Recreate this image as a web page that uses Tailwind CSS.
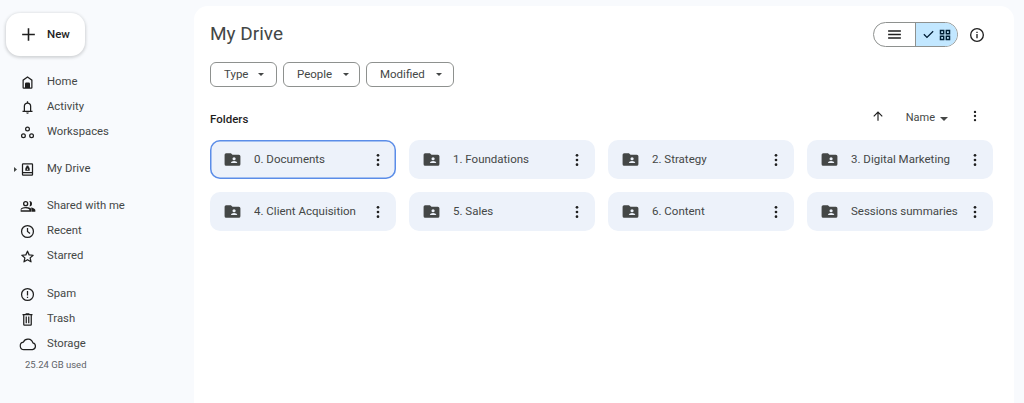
<!DOCTYPE html>
<html lang="en">
<head>
    <meta charset="UTF-8">
    <title>My Drive</title>
    <script src="https://cdn.jsdelivr.net/npm/@tailwindcss/browser@4"></script>
</head>
<body class="bg-[#f8fafd] h-[403px] overflow-hidden flex font-['Roboto',sans-serif] text-[#444746]">
<!-- Sidebar -->
<aside class="w-[194px] shrink-0 flex flex-col">
    <button class="ml-[6px] mt-[13px] w-[79px] h-[43px] bg-white rounded-[14px] shadow-[0_1px_3px_1px_rgba(60,64,67,0.2)] flex items-center text-[#1f1f1f] text-[11.5px] font-medium">
        <svg class="ml-[13px] w-[19px] h-[19px]" viewBox="0 0 24 24" fill="#1f1f1f"><path d="M11 13H4v-2h7V4h2v7h7v2h-7v7h-2z"/></svg>
        <span class="ml-[9px]">New</span>
    </button>
    <nav class="mt-[14px] flex flex-col text-[11.3px]">
        <a class="h-[25px] flex items-center pl-[20px] gap-[12px]">
            <svg class="w-[15px] h-[15px]" viewBox="0 0 24 24" fill="#1f1f1f"><path d="M12 2 4 7.500V20a2 2 0 0 0 2 2h12a2 2 0 0 0 2-2V7.500L12 2zm6 18h-2v-6a2 2 0 0 0-2-2h-4a2 2 0 0 0-2 2v6H6V8.600l6-4.200 6 4.200V20z"/><path d="M9.500 14h5v6h-5z"/></svg>
            <span>Home</span>
        </a>
        <a class="h-[25px] flex items-center pl-[20px] gap-[12px]">
            <svg class="w-[15px] h-[15px]" viewBox="0 0 24 24" fill="#1f1f1f"><path d="M4 19v-2h2v-7a6 6 0 0 1 5-5.900V2h2v2.100A6 6 0 0 1 18 10v7h2v2H4zm4-2h8v-7a4 4 0 0 0-8 0v7zm4 5a2 2 0 0 1-2-2h4a2 2 0 0 1-2 2z"/></svg>
            <span>Activity</span>
        </a>
        <a class="h-[25px] flex items-center pl-[20px] gap-[12px]">
            <svg class="w-[15px] h-[15px]" viewBox="0 0 24 24" fill="none" stroke="#1f1f1f" stroke-width="2"><circle cx="12" cy="6.500" r="3"/><circle cx="5.500" cy="17" r="3"/><circle cx="18.500" cy="17" r="3"/></svg>
            <span>Workspaces</span>
        </a>
        <a class="mt-[12px] h-[25px] flex items-center pl-[20px] gap-[12px] relative">
            <svg class="absolute left-[14px] top-[10px] w-[3px] h-[5px]" viewBox="0 0 3 5" fill="#444746"><path d="M0 0l3 2.500L0 5z"/></svg>
            <svg class="w-[15px] h-[15px]" viewBox="0 0 24 24" fill="#1f1f1f"><path d="M5 2h14a2 2 0 0 1 2 2v16a2 2 0 0 1-2 2H5a2 2 0 0 1-2-2V4a2 2 0 0 1 2-2zm0 2v12h14V4H5zm0 14v2h14v-2H5z"/><path d="M12 5.500a2 2 0 0 1 2 2v.600a3 3 0 0 1 1.500 2.600V14h-7v-3.300A3 3 0 0 1 10 8.100v-.600a2 2 0 0 1 2-2zm0 5a1 1 0 1 0 0 2 1 1 0 0 0 0-2z"/></svg>
            <span>My Drive</span>
        </a>
        <a class="mt-[12px] h-[25px] flex items-center pl-[20px] gap-[11px]">
            <svg class="w-[16px] h-[16px]" viewBox="0 0 24 24" fill="#1f1f1f"><path d="M1 19v-2.800c0-.600.100-1.100.400-1.600.300-.500.700-.800 1.200-1.100a14 14 0 0 1 3.200-1.200 13.700 13.700 0 0 1 6.400 0c1 .300 2.100.700 3.200 1.200.500.300.900.600 1.200 1.100.300.500.400 1 .400 1.600V19H1zm2-2h11v-.800c0-.400-.200-.700-.500-.900a13 13 0 0 0-2.700-1 11.500 11.500 0 0 0-5.600 0c-.900.200-1.800.600-2.700 1-.300.200-.500.500-.500.900v.800zM8.500 11A4 4 0 0 1 4.500 7a4 4 0 0 1 8 0 4 4 0 0 1-4 4zm0-2a2 2 0 1 0 0-4 2 2 0 0 0 0 4zM14 11a6 6 0 0 0 1-4 6 6 0 0 0-1-4 4 4 0 0 1 0 8zm3.500 8v-3c0-1-.400-2.200-1.400-3.300 3.600.400 6.900 1.900 6.900 3.800V19h-5.500z"/></svg>
            <span>Shared with me</span>
        </a>
        <a class="h-[25px] flex items-center pl-[20px] gap-[12px]">
            <svg class="w-[15px] h-[15px]" viewBox="0 0 24 24" fill="none" stroke="#1f1f1f" stroke-width="2"><circle cx="12" cy="12" r="9.500"/><path d="M12 6.500V12l4 3"/></svg>
            <span>Recent</span>
        </a>
        <a class="h-[25px] flex items-center pl-[20px] gap-[12px]">
            <svg class="w-[15px] h-[15px]" viewBox="0 0 24 24" fill="none" stroke="#1f1f1f" stroke-width="2" stroke-linejoin="round"><path d="M12 3.500l2.600 5.900 6.400.600-4.800 4.200 1.400 6.300L12 17.200l-5.600 3.300 1.400-6.300L3 10l6.400-.600z"/></svg>
            <span>Starred</span>
        </a>
        <a class="mt-[12.500px] h-[25px] flex items-center pl-[20px] gap-[12px]">
            <svg class="w-[15px] h-[15px]" viewBox="0 0 24 24" fill="none" stroke="#1f1f1f" stroke-width="2"><circle cx="12" cy="12" r="9.500"/><path d="M12 6.500v7M12 15.500v2"/></svg>
            <span>Spam</span>
        </a>
        <a class="h-[25px] flex items-center pl-[20px] gap-[12px]">
            <svg class="w-[15px] h-[15px]" viewBox="0 0 24 24" fill="#1f1f1f"><path d="M7 22a2 2 0 0 1-2-2V5H4V3h5V2h6v1h5v2h-1v15a2 2 0 0 1-2 2H7zM17 5H7v15h10V5zM9 18h2V7H9v11zm4 0h2V7h-2v11z"/></svg>
            <span>Trash</span>
        </a>
        <a class="h-[25px] flex items-center pl-[19px] gap-[10px]">
            <svg class="w-[18px] h-[18px]" viewBox="0 0 24 24" fill="none" stroke="#1f1f1f" stroke-width="1.600"><path d="M6.500 19.500a5 5 0 0 1-.800-9.900 6.800 6.800 0 0 1 12.800.900 4.600 4.600 0 0 1-.500 9H6.500z"/></svg>
            <span>Storage</span>
        </a>
        <div class="mt-[-2px] pl-[25px] text-[9.500px] leading-[20px] text-[#5f6368]">25.24 GB used</div>
    </nav>
</aside>
<!-- Main panel -->
<main class="mt-[6px] w-[820px] h-[397px] bg-white rounded-t-[14px] pl-[16px] pr-[21px]">
    <div class="h-[56px] flex items-center justify-between">
        <h1 class="text-[19px] text-[#444746]">My Drive</h1>
        <div class="flex items-center mt-[1px] mr-[8px]">
            <div class="w-[85px] h-[25px] flex rounded-full border border-[#8e918f] overflow-hidden">
                <div class="w-[42px] flex items-center justify-center border-r border-[#8e918f]">
                    <svg class="w-[17px] h-[17px]" viewBox="0 0 24 24" fill="#1f1f1f"><path d="M3 18v-2h18v2H3zm0-5v-2h18v2H3zm0-5V6h18v2H3z"/></svg>
                </div>
                <div class="flex-1 bg-[#c2e7ff] flex items-center justify-center gap-[2px]">
                    <svg class="w-[15px] h-[15px]" viewBox="0 0 24 24" fill="#001d35"><path d="M9.550 18 3.850 12.300l1.400-1.400 4.300 4.300 9.200-9.200 1.400 1.400z"/></svg>
                    <svg class="w-[14px] h-[14px]" viewBox="0 0 24 24" fill="#001d35"><path d="M3 3h8v8H3V3zm2.500 2.500v3h3v-3h-3zM13 3h8v8h-8V3zm2.500 2.500v3h3v-3h-3zM3 13h8v8H3v-8zm2.500 2.500v3h3v-3h-3zM13 13h8v8h-8v-8zm2.500 2.500v3h3v-3h-3z"/></svg>
                </div>
            </div>
            <svg class="ml-[11px] w-[16px] h-[16px]" viewBox="0 0 24 24" fill="none" stroke="#1f1f1f" stroke-width="2"><circle cx="12" cy="12" r="9.500"/><path d="M12 10.500V17M12 7v2"/></svg>
        </div>
    </div>
    <div class="flex gap-[6px] text-[11.500px]">
        <button class="w-[67px] h-[25px] border border-[#8e918f] rounded-[6px] flex items-center pl-[13px]">Type<svg class="ml-[10px] w-[6px] h-[3px]" viewBox="0 0 6 3" fill="#444746"><path d="M0 0h6L3 3z"/></svg></button>
        <button class="w-[77px] h-[25px] border border-[#8e918f] rounded-[6px] flex items-center pl-[13px]">People<svg class="ml-[11px] w-[6px] h-[3px]" viewBox="0 0 6 3" fill="#444746"><path d="M0 0h6L3 3z"/></svg></button>
        <button class="w-[88px] h-[25px] border border-[#8e918f] rounded-[6px] flex items-center pl-[13px]">Modified<svg class="ml-[11px] w-[6px] h-[3px]" viewBox="0 0 6 3" fill="#444746"><path d="M0 0h6L3 3z"/></svg></button>
    </div>
    <div class="mt-[16px] h-[29px] flex items-center justify-between">
        <h2 class="text-[11.500px] font-medium text-[#1f1f1f] mt-[5px]">Folders</h2>
        <div class="flex items-center text-[11px] mr-[11px] mt-[-4px]">
            <svg class="w-[14px] h-[14px] mr-[21px]" viewBox="0 0 24 24" fill="#1f1f1f"><path d="M11 20V7.800l-5.600 5.600L4 12l8-8 8 8-1.400 1.400L13 7.800V20z"/></svg>
            <span class="mt-[6px]">Name</span>
            <svg class="ml-[5px] mt-[6px] w-[8px] h-[4px]" viewBox="0 0 8 4" fill="#444746"><path d="M0 0h8L4 4z"/></svg>
            <svg class="ml-[20px] w-[14px] h-[14px]" viewBox="0 0 24 24" fill="#1f1f1f"><circle cx="12" cy="5" r="2"/><circle cx="12" cy="12" r="2"/><circle cx="12" cy="19" r="2"/></svg>
        </div>
    </div>
    <div class="mt-[8px] grid grid-cols-4 gap-[13px] text-[11.500px]">
        <div class="h-[39px] bg-[#edf2fa] rounded-[10px] flex items-center pl-[13px] pr-[10px] ring-[1.5px] ring-inset ring-[#5b8de8]">
            <svg class="w-[19px] h-[19px] shrink-0" viewBox="0 0 24 24" fill="#444746"><path d="M4 20a2 2 0 0 1-2-2V6a2 2 0 0 1 2-2h6l2 2h8a2 2 0 0 1 2 2v10a2 2 0 0 1-2 2H4z"/><circle cx="14" cy="11" r="2" fill="#edf2fa"/><path d="M10 16.500c0-1.500 2-2.500 4-2.500s4 1 4 2.500z" fill="#edf2fa"/></svg>
            <span class="ml-[12px] flex-1 truncate">0. Documents</span>
            <svg class="w-[16px] h-[16px] shrink-0" viewBox="0 0 24 24" fill="#1f1f1f"><circle cx="12" cy="5" r="2"/><circle cx="12" cy="12" r="2"/><circle cx="12" cy="19" r="2"/></svg>
        </div>
        <div class="h-[39px] bg-[#edf2fa] rounded-[10px] flex items-center pl-[13px] pr-[10px]">
            <svg class="w-[19px] h-[19px] shrink-0" viewBox="0 0 24 24" fill="#444746"><path d="M4 20a2 2 0 0 1-2-2V6a2 2 0 0 1 2-2h6l2 2h8a2 2 0 0 1 2 2v10a2 2 0 0 1-2 2H4z"/><circle cx="14" cy="11" r="2" fill="#edf2fa"/><path d="M10 16.500c0-1.500 2-2.500 4-2.500s4 1 4 2.500z" fill="#edf2fa"/></svg>
            <span class="ml-[12px] flex-1 truncate">1. Foundations</span>
            <svg class="w-[16px] h-[16px] shrink-0" viewBox="0 0 24 24" fill="#1f1f1f"><circle cx="12" cy="5" r="2"/><circle cx="12" cy="12" r="2"/><circle cx="12" cy="19" r="2"/></svg>
        </div>
        <div class="h-[39px] bg-[#edf2fa] rounded-[10px] flex items-center pl-[13px] pr-[10px]">
            <svg class="w-[19px] h-[19px] shrink-0" viewBox="0 0 24 24" fill="#444746"><path d="M4 20a2 2 0 0 1-2-2V6a2 2 0 0 1 2-2h6l2 2h8a2 2 0 0 1 2 2v10a2 2 0 0 1-2 2H4z"/><circle cx="14" cy="11" r="2" fill="#edf2fa"/><path d="M10 16.500c0-1.500 2-2.500 4-2.500s4 1 4 2.500z" fill="#edf2fa"/></svg>
            <span class="ml-[12px] flex-1 truncate">2. Strategy</span>
            <svg class="w-[16px] h-[16px] shrink-0" viewBox="0 0 24 24" fill="#1f1f1f"><circle cx="12" cy="5" r="2"/><circle cx="12" cy="12" r="2"/><circle cx="12" cy="19" r="2"/></svg>
        </div>
        <div class="h-[39px] bg-[#edf2fa] rounded-[10px] flex items-center pl-[13px] pr-[10px]">
            <svg class="w-[19px] h-[19px] shrink-0" viewBox="0 0 24 24" fill="#444746"><path d="M4 20a2 2 0 0 1-2-2V6a2 2 0 0 1 2-2h6l2 2h8a2 2 0 0 1 2 2v10a2 2 0 0 1-2 2H4z"/><circle cx="14" cy="11" r="2" fill="#edf2fa"/><path d="M10 16.500c0-1.500 2-2.500 4-2.500s4 1 4 2.500z" fill="#edf2fa"/></svg>
            <span class="ml-[12px] flex-1 truncate">3. Digital Marketing</span>
            <svg class="w-[16px] h-[16px] shrink-0" viewBox="0 0 24 24" fill="#1f1f1f"><circle cx="12" cy="5" r="2"/><circle cx="12" cy="12" r="2"/><circle cx="12" cy="19" r="2"/></svg>
        </div>
        <div class="h-[39px] bg-[#edf2fa] rounded-[10px] flex items-center pl-[13px] pr-[10px]">
            <svg class="w-[19px] h-[19px] shrink-0" viewBox="0 0 24 24" fill="#444746"><path d="M4 20a2 2 0 0 1-2-2V6a2 2 0 0 1 2-2h6l2 2h8a2 2 0 0 1 2 2v10a2 2 0 0 1-2 2H4z"/><circle cx="14" cy="11" r="2" fill="#edf2fa"/><path d="M10 16.500c0-1.500 2-2.500 4-2.500s4 1 4 2.500z" fill="#edf2fa"/></svg>
            <span class="ml-[12px] flex-1 truncate">4. Client Acquisition</span>
            <svg class="w-[16px] h-[16px] shrink-0" viewBox="0 0 24 24" fill="#1f1f1f"><circle cx="12" cy="5" r="2"/><circle cx="12" cy="12" r="2"/><circle cx="12" cy="19" r="2"/></svg>
        </div>
        <div class="h-[39px] bg-[#edf2fa] rounded-[10px] flex items-center pl-[13px] pr-[10px]">
            <svg class="w-[19px] h-[19px] shrink-0" viewBox="0 0 24 24" fill="#444746"><path d="M4 20a2 2 0 0 1-2-2V6a2 2 0 0 1 2-2h6l2 2h8a2 2 0 0 1 2 2v10a2 2 0 0 1-2 2H4z"/><circle cx="14" cy="11" r="2" fill="#edf2fa"/><path d="M10 16.500c0-1.500 2-2.500 4-2.500s4 1 4 2.500z" fill="#edf2fa"/></svg>
            <span class="ml-[12px] flex-1 truncate">5. Sales</span>
            <svg class="w-[16px] h-[16px] shrink-0" viewBox="0 0 24 24" fill="#1f1f1f"><circle cx="12" cy="5" r="2"/><circle cx="12" cy="12" r="2"/><circle cx="12" cy="19" r="2"/></svg>
        </div>
        <div class="h-[39px] bg-[#edf2fa] rounded-[10px] flex items-center pl-[13px] pr-[10px]">
            <svg class="w-[19px] h-[19px] shrink-0" viewBox="0 0 24 24" fill="#444746"><path d="M4 20a2 2 0 0 1-2-2V6a2 2 0 0 1 2-2h6l2 2h8a2 2 0 0 1 2 2v10a2 2 0 0 1-2 2H4z"/><circle cx="14" cy="11" r="2" fill="#edf2fa"/><path d="M10 16.500c0-1.500 2-2.500 4-2.500s4 1 4 2.500z" fill="#edf2fa"/></svg>
            <span class="ml-[12px] flex-1 truncate">6. Content</span>
            <svg class="w-[16px] h-[16px] shrink-0" viewBox="0 0 24 24" fill="#1f1f1f"><circle cx="12" cy="5" r="2"/><circle cx="12" cy="12" r="2"/><circle cx="12" cy="19" r="2"/></svg>
        </div>
        <div class="h-[39px] bg-[#edf2fa] rounded-[10px] flex items-center pl-[13px] pr-[10px]">
            <svg class="w-[19px] h-[19px] shrink-0" viewBox="0 0 24 24" fill="#444746"><path d="M4 20a2 2 0 0 1-2-2V6a2 2 0 0 1 2-2h6l2 2h8a2 2 0 0 1 2 2v10a2 2 0 0 1-2 2H4z"/><circle cx="14" cy="11" r="2" fill="#edf2fa"/><path d="M10 16.500c0-1.500 2-2.500 4-2.500s4 1 4 2.500z" fill="#edf2fa"/></svg>
            <span class="ml-[12px] flex-1 truncate">Sessions summaries</span>
            <svg class="w-[16px] h-[16px] shrink-0" viewBox="0 0 24 24" fill="#1f1f1f"><circle cx="12" cy="5" r="2"/><circle cx="12" cy="12" r="2"/><circle cx="12" cy="19" r="2"/></svg>
        </div>
    </div>
</main>
</body>
</html>
